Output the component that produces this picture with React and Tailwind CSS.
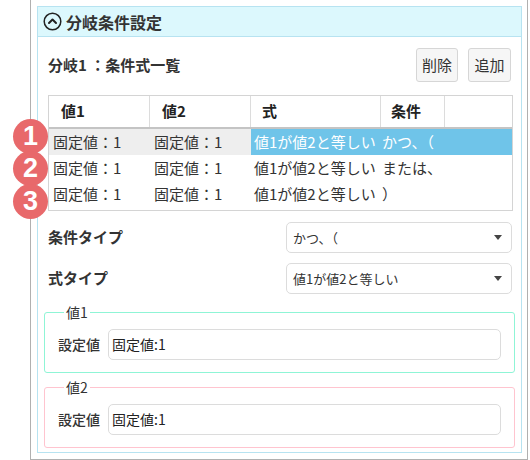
import React from "react";

const font = { fontFamily: '"Noto Sans CJK JP", "Noto Sans", sans-serif' };

function Caret() {
  return (
    <svg width="8" height="5" viewBox="0 0 8 5" className="shrink-0">
      <path d="M0 0 L8 0 L4 5 Z" fill="#444" />
    </svg>
  );
}

function Select({ value }) {
  return (
    <div className="flex h-[31px] w-[226px] items-center justify-between rounded-[5px] border border-[#dcdcdc] bg-white pl-[6px] pr-[9px] text-[13px] text-[#333]">
      <span>{value}</span>
      <Caret />
    </div>
  );
}

function Badge({ n, top }) {
  return (
    <div
      className="absolute left-[13px] flex h-[35px] w-[35px] items-center justify-center rounded-full bg-[#e8696b] text-[27px] font-bold leading-none text-white"
      style={{ top, fontFamily: '"Liberation Sans", Arial, sans-serif' }}
    >
      {n}
    </div>
  );
}

function ValueFieldset({ legend, color }) {
  return (
    <fieldset
      className={`mx-[6px] rounded-[3px] border px-[13px] pb-[12px] pt-[7px] ${color}`}
    >
      <legend className="ml-[6px] px-[2px] text-[14px] leading-[20px] text-[#333]">{legend}</legend>
      <div className="flex items-center">
        <span className="w-[50px] text-[14px] font-medium text-[#333]">設定値</span>
        <div className="flex h-[31px] flex-1 items-center rounded-[5px] border border-[#dcdcdc] bg-white pl-[3px] text-[14px] text-[#222]">
          固定値:1
        </div>
      </div>
    </fieldset>
  );
}

export default function App() {
  const rows = [
    { a: "固定値：1", b: "固定値：1", f: "値1が値2と等しい", c: "かつ、（", sel: true },
    { a: "固定値：1", b: "固定値：1", f: "値1が値2と等しい", c: "または、" },
    { a: "固定値：1", b: "固定値：1", f: "値1が値2と等しい", c: "）" },
  ];
  return (
    <div className="relative h-[460px] w-[530px] overflow-hidden bg-white" style={font}>
      <div className="ml-[30px] h-[460px] w-[498px] border-x border-b border-[#b0b0b0] pb-[6px] pl-[6px] pr-[5px] pt-[6px]">
        <div className="flex h-[447px] w-[485px] flex-col border border-[#b7e3f1]">
          <div className="flex h-[30px] shrink-0 items-center gap-[4px] border-b border-[#b7e3f1] bg-[#dcf8fd] pl-[5px]">
            <svg width="19" height="19" viewBox="0 0 19 19">
              <circle cx="9.5" cy="9.5" r="8.3" fill="none" stroke="#222" strokeWidth="1.5" />
              <path d="M6 11 L9.5 7.5 L13 11" fill="none" stroke="#222" strokeWidth="2" strokeLinecap="round" strokeLinejoin="round" />
            </svg>
            <span className="text-[16px] font-bold text-[#333]">分岐条件設定</span>
          </div>

          <div className="mt-[11px] flex items-center justify-between pl-[10px] pr-[10px]">
            <span className="text-[15px] font-bold text-[#333]">分岐1 ：条件式一覧</span>
            <div className="flex gap-[10px]">
              <button className="h-[34px] w-[42px] rounded-[3px] border border-[#d6d6d6] bg-[#f6f6f6] text-[15px] text-[#333]">削除</button>
              <button className="h-[34px] w-[43px] rounded-[3px] border border-[#d6d6d6] bg-[#f6f6f6] text-[15px] text-[#333]">追加</button>
            </div>
          </div>

          <div className="ml-[10px] mt-[13px] w-[465px] border border-[#d4d4d4] pb-[3px]">
            <div className="flex h-[33px] border-b-2 border-[#c4c4c4] text-[15px] font-bold text-[#222]">
              <div className="flex w-[101px] items-center border-r border-[#dcdcdc] pl-[12px]">値1</div>
              <div className="flex w-[101px] items-center border-r border-[#dcdcdc] pl-[12px]">値2</div>
              <div className="flex w-[130px] items-center border-r border-[#dcdcdc] pl-[11px]">式</div>
              <div className="flex w-[64px] items-center border-r border-[#dcdcdc] pl-[10px]">条件</div>
              <div className="flex-1" />
            </div>
            {rows.map((r, i) => (
              <div key={i} className="flex h-[26px] text-[15px] text-[#333]">
                <div className={`flex w-[202px] items-center ${r.sel ? "bg-[#eeeeee]" : ""}`}>
                  <span className="w-[101px] pl-[4px]">{r.a}</span>
                  <span className="w-[101px] pl-[4px]">{r.b}</span>
                </div>
                <div className={`flex flex-1 items-center ${r.sel ? "bg-[#6fc4e9] text-white" : ""}`}>
                  <span className="w-[130px] pl-[3px] whitespace-nowrap">{r.f}</span>
                  <span className="pl-[1px] whitespace-nowrap">{r.c}</span>
                </div>
              </div>
            ))}
          </div>

          <div className="mt-[11px] flex items-center justify-between pl-[10px] pr-[9px]">
            <span className="text-[15px] font-bold text-[#333]">条件タイプ</span>
            <Select value="かつ、（" />
          </div>
          <div className="mt-[10px] flex items-center justify-between pl-[10px] pr-[9px]">
            <span className="text-[15px] font-bold text-[#333]">式タイプ</span>
            <Select value="値1が値2と等しい" />
          </div>

          <div className="mt-[8px]">
            <ValueFieldset legend="値1" color="border-[#8ff5d6]" />
          </div>
          <div className="mt-[4px]">
            <ValueFieldset legend="値2" color="border-[#ffc4cf]" />
          </div>
        </div>
      </div>

      <Badge n="1" top={119} />
      <Badge n="2" top={151} />
      <Badge n="3" top={184} />
    </div>
  );
}
